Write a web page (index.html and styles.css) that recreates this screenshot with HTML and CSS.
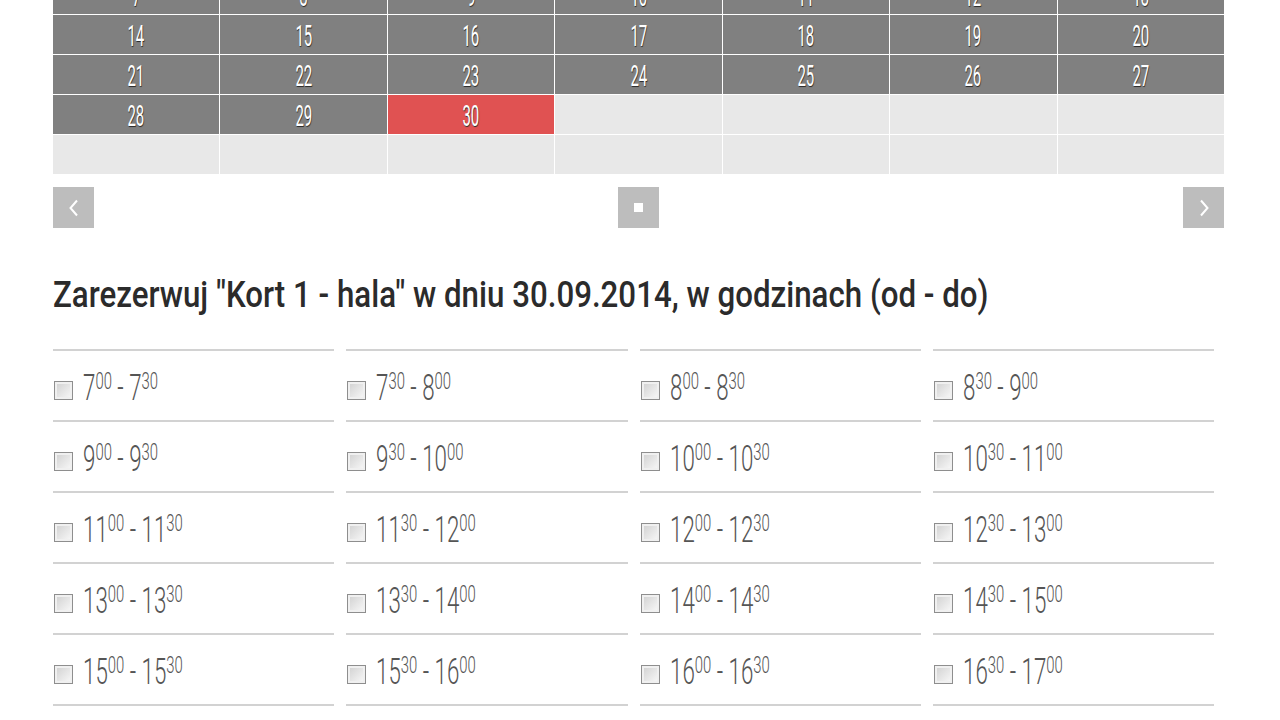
FILE: index.html
```html
<!DOCTYPE html>
<html lang="pl">
<head>
    <meta charset="UTF-8">
    <meta name="viewport" content="width=device-width, initial-scale=1.0">
    <title>Rezerwacja kortu</title>
    <link rel="stylesheet" href="styles.css">
</head>
<body>
    <div class="page">
        <div class="calendar" id="calendar"></div>

        <div class="cal-nav">
            <button class="nav-btn" aria-label="Poprzedni miesiąc">
                <svg width="12" height="18" viewBox="0 0 12 18"><polyline points="9,1.5 2.5,9 9,16.5" fill="none" stroke="#fff" stroke-width="2"/></svg>
            </button>
            <button class="nav-btn" aria-label="Dzisiaj"><span class="dot"></span></button>
            <button class="nav-btn" aria-label="Następny miesiąc">
                <svg width="12" height="18" viewBox="0 0 12 18"><polyline points="3,1.5 9.5,9 3,16.5" fill="none" stroke="#fff" stroke-width="2"/></svg>
            </button>
        </div>

        <h2 class="title"><span>Zarezerwuj "Kort 1 - hala" w dniu 30.09.2014, w godzinach (od - do)</span></h2>

        <div class="slots" id="slots"></div>
    </div>

    <script>
        // days of the month, from the row with 7th onwards, padded to full weeks
        const calendar = document.getElementById('calendar');
        for (let i = 7; i < 7 + 35; i++) {
            const cell = document.createElement('div');
            cell.className = 'day';
            if (i > 30) {
                cell.classList.add('empty');
            } else {
                cell.innerHTML = '<span>' + i + '</span>';
                if (i === 30) cell.classList.add('selected');
            }
            calendar.appendChild(cell);
        }

        // half-hour slots from 7:00 to 22:00
        const slots = document.getElementById('slots');
        for (let m = 7 * 60; m < 22 * 60; m += 30) {
            const from = [Math.floor(m / 60), m % 60 ? '30' : '00'];
            const to = [Math.floor((m + 30) / 60), (m + 30) % 60 ? '30' : '00'];
            const label = document.createElement('label');
            label.className = 'slot';
            label.innerHTML = '<input type="checkbox"><span class="box"></span>' +
                '<span class="time">' + from[0] + '<sup>' + from[1] + '</sup> - ' + to[0] + '<sup>' + to[1] + '</sup></span>';
            slots.appendChild(label);
        }
    </script>
</body>
</html>
```

FILE: styles.css
```css
* {
    margin: 0;
    padding: 0;
    box-sizing: border-box;
}

body {
    font-family: Roboto, "Liberation Sans", sans-serif;
    background: #fff;
    color: #333;
}

.page {
    width: 1171px;
    margin-left: 53px;
}

/* calendar grid */
.calendar {
    margin-top: -25px;
    display: grid;
    grid-template-columns: repeat(7, 1fr);
    gap: 1px;
    background: #fff;
}

.day {
    height: 39px;
    background: #808080;
    color: #fff;
    text-align: center;
    padding-top: 3px;
}

.day span {
    display: inline-block;
    font-size: 30px;
    font-weight: 400;
    line-height: 36px;
    transform: scaleX(.5);
    text-shadow: 1px 1px 1px #2a2a2a;
}

.day.selected {
    background: #e05252;
}

.day.empty {
    background: #e8e8e8;
}

.cal-nav {
    display: flex;
    justify-content: space-between;
    margin-top: 13px;
}

.nav-btn {
    width: 41px;
    height: 41px;
    border: none;
    background: #bdbdbd;
    display: flex;
    align-items: center;
    justify-content: center;
    cursor: pointer;
}

.dot {
    width: 9px;
    height: 9px;
    background: #fff;
}

.title {
    margin-top: 44px;
    font-size: 37px;
    font-weight: 500;
    line-height: 46px;
    color: #2b2b2b;
    white-space: nowrap;
}

.title span {
    display: inline-block;
    transform: scaleX(.845);
    transform-origin: left center;
}

/* time slots */
.slots {
    margin-top: 31px;
    width: 1161px;
    display: grid;
    grid-template-columns: repeat(4, 1fr);
    column-gap: 12px;
}

.slot {
    border-top: 2px solid #d2d2d2;
    height: 71px;
    display: flex;
    align-items: center;
    padding-top: 4px;
    cursor: pointer;
}

.slot input {
    display: none;
}

.box {
    width: 19px;
    height: 19px;
    margin-left: 1px;
    margin-top: 6px;
    border: 1px solid #8e8e8e;
    background: linear-gradient(135deg, #cfcfcf, #fafafa);
    box-shadow: inset 0 0 0 2px #f0f0f0;
    flex-shrink: 0;
}

.slot input:checked + .box {
    background: #777;
}

.time {
    display: inline-block;
    margin-left: 10px;
    font-size: 36px;
    font-weight: 300;
    line-height: 40px;
    color: #555;
    white-space: nowrap;
    transform: scaleX(.62);
    transform-origin: left center;
}

.time sup {
    font-size: 24px;
    vertical-align: 11px;
    line-height: 0;
}
```
